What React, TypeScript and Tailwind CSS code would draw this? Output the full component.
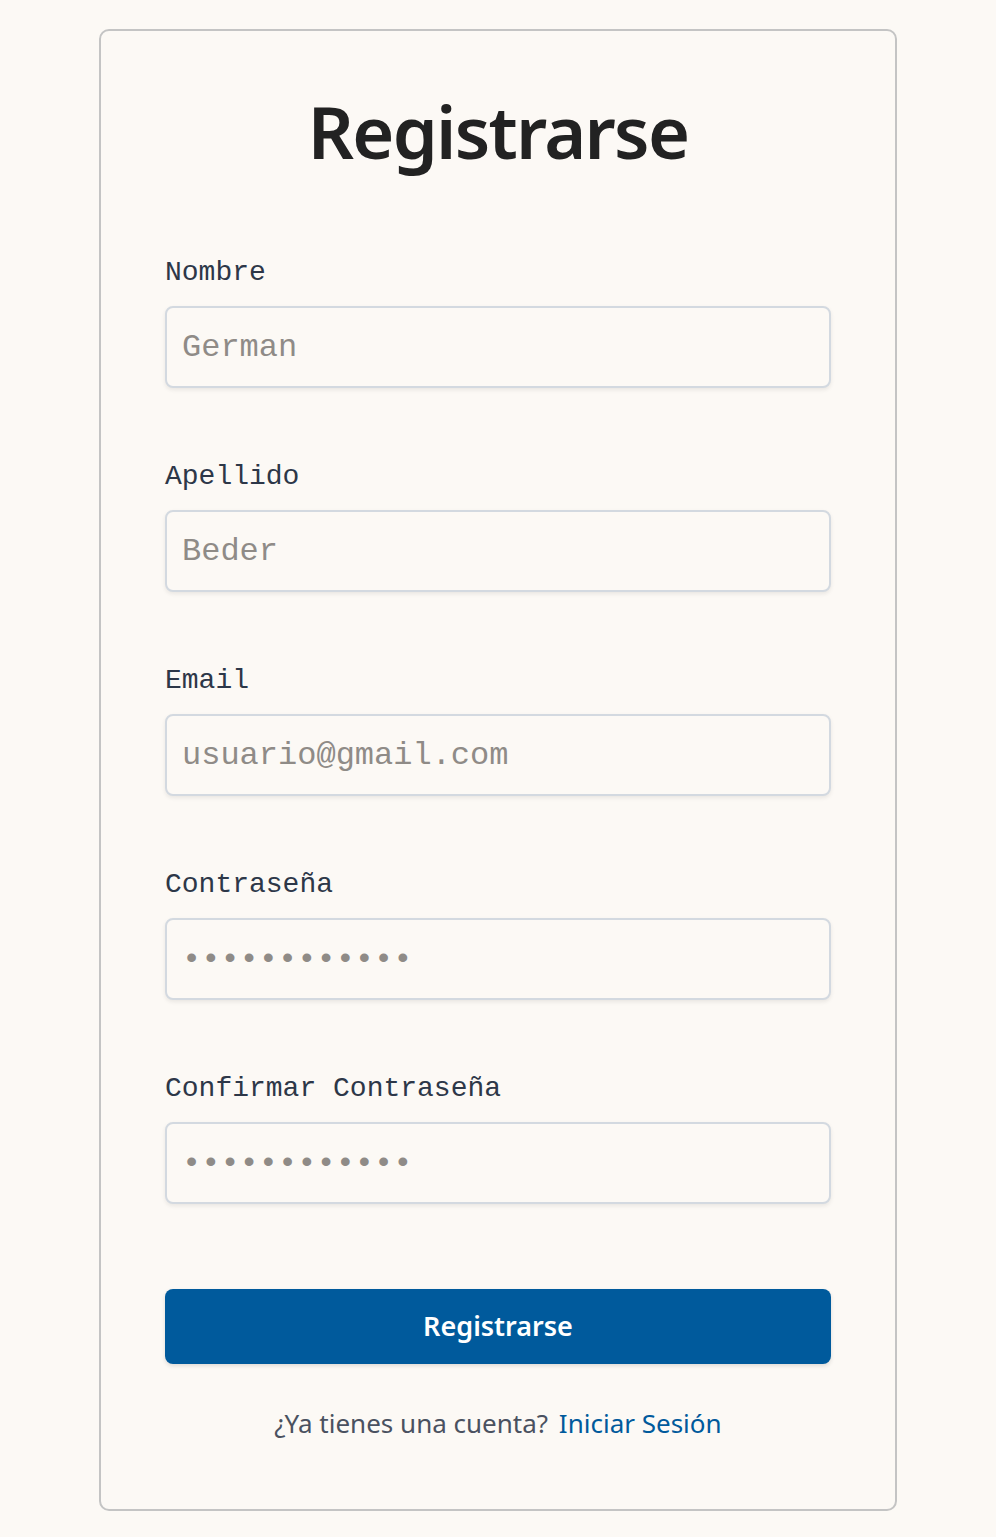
import { useState } from 'react';

const fields = [
    { id: 'nombre', label: 'Nombre', placeholder: 'German' },
    { id: 'apellido', label: 'Apellido', placeholder: 'Beder' },
    { id: 'email', label: 'Email', placeholder: 'usuario@gmail.com' },
    { id: 'password', label: 'Contraseña', placeholder: '••••••••••••' },
    { id: 'confirm', label: 'Confirmar Contraseña', placeholder: '••••••••••••' },
];

export default function App() {
    const [values, setValues] = useState<Record<string, string>>({});

    return (
        <div className="min-h-[1537px] bg-[#fcf9f5] pt-[29px]">
            <div className="mx-auto w-[798px] rounded-[10px] border-2 border-[#c4c4c4] bg-[#fcf9f5] px-16 pt-16 pb-[68px]">
                <h1 className="text-center font-['Noto_Sans',sans-serif] text-[72px] font-semibold leading-none tracking-[-1.7px] text-[#222222]">
                    Registrarse
                </h1>

                <form className="mt-[88px]" onSubmit={(e) => e.preventDefault()}>
                    <div className="flex flex-col gap-[71px]">
                        {fields.map((f) => (
                            <div key={f.id}>
                                <label htmlFor={f.id} className="mb-[15px] block font-['Liberation_Mono',monospace] text-[28px] leading-[36px] text-[#2d3748]">
                                    {f.label}
                                </label>
                                <input
                                    id={f.id}
                                    type="text"
                                    placeholder={f.placeholder}
                                    value={values[f.id] || ''}
                                    onChange={(e) => setValues({ ...values, [f.id]: e.target.value })}
                                    className="block h-[82px] w-full rounded-[8px] border-2 border-[#d3d9e0] bg-[#fcf9f5] px-[15px] font-['Liberation_Mono',monospace] text-[32px] text-[#333] shadow-[0_2px_4px_rgba(0,0,0,0.08)] outline-none placeholder:text-[#8f8b87]"
                                />
                            </div>
                        ))}
                    </div>

                    <button
                        type="submit"
                        className="mt-[85px] block h-[75px] w-full rounded-[8px] bg-[#005a9c] font-['Noto_Sans',sans-serif] text-[27px] font-semibold text-white shadow-[0_2px_4px_rgba(0,0,0,0.12)]"
                    >
                        Registrarse
                    </button>
                </form>

                <p className="mt-[41px] text-center font-['Noto_Sans',sans-serif] text-[26px] leading-[36px] text-[#4a5160]">
                    ¿Ya tienes una cuenta?{' '}
                    <a href="#" className="ml-1 text-[#005a9c]">Iniciar Sesión</a>
                </p>
            </div>
        </div>
    );
}
